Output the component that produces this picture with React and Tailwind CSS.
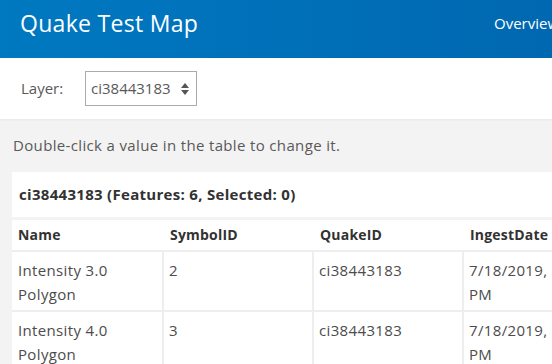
export default function App() {
  const rows = [
    { name: ["Intensity 3.0", "Polygon"], symbol: "2", quake: "ci38443183", date: ["7/18/2019, 3:12:45", "PM"] },
    { name: ["Intensity 4.0", "Polygon"], symbol: "3", quake: "ci38443183", date: ["7/18/2019, 3:12:45", "PM"] },
    { name: ["Intensity 5.0", "Polygon"], symbol: "4", quake: "ci38443183", date: ["7/18/2019, 3:12:45", "PM"] },
  ];

  return (
    <div
      className="w-[552px] h-[364px] overflow-hidden bg-[#f3f3f3]"
      style={{ fontFamily: "'Open Sans', Lato, sans-serif" }}
    >
      {/* Top bar */}
      <header className="h-[58px] pb-[12px] flex items-center bg-gradient-to-r from-[#0079c1] to-[#0068b1] whitespace-nowrap">
        <h1 className="pl-[20px] text-[23px] tracking-[0.3px] leading-none text-white w-[494px] shrink-0">Quake Test Map</h1>
        <span className="text-[15px] text-white">Overview</span>
      </header>

      {/* Layer picker */}
      <div className="h-[61px] bg-white flex items-center pl-[21px] shadow-[0_1px_2px_rgba(0,0,0,0.05)]">
        <span className="text-[15px] text-[#595959] w-[64px]">Layer:</span>
        <div className="w-[112px] h-[35px] border border-[#ababab] flex items-center pl-[5px] pr-[7px] justify-between">
          <span className="text-[15px] text-[#595959]">ci38443183</span>
          <svg width="8" height="12" viewBox="0 0 8 12">
            <path d="M4 0 L8 5 L0 5 Z" fill="#555" />
            <path d="M0 7 L8 7 L4 12 Z" fill="#555" />
          </svg>
        </div>
      </div>

      <p className="pt-[14px] pl-[13px] mb-[15px] text-[15px] tracking-[0.35px] leading-[24px] text-[#595959] whitespace-nowrap">
        Double-click a value in the table to change it.
      </p>

      {/* Table card */}
      <div className="ml-[12px] w-[600px]">
        <div className="h-[45px] bg-white flex items-center pl-[7px] text-[15px] tracking-[0.3px] font-bold text-[#323232] whitespace-nowrap">
          ci38443183 (Features: 6, Selected: 0)
        </div>
        <table className="mt-[3px] bg-white table-fixed border-collapse text-[15px] tracking-[0.35px] leading-[24px] text-[#4c4c4c] w-[600px]">
          <colgroup>
            <col className="w-[151px]" />
            <col className="w-[150px]" />
            <col className="w-[150px]" />
            <col className="w-[149px]" />
          </colgroup>
          <thead>
            <tr className="h-[31px] text-left text-[14px] tracking-[0.2px] text-[#323232]">
              <th className="pl-[6px] font-bold">Name</th>
              <th className="pl-[7px] font-bold">SymbolID</th>
              <th className="pl-[7px] font-bold">QuakeID</th>
              <th className="pl-[7px] font-bold">IngestDate</th>
            </tr>
          </thead>
          <tbody>
            {rows.map((r, i) => (
              <tr key={i} className="border-t-2 border-[#eeeeee] align-top">
                <td className="pl-[6px] pt-[6px] pb-[4px]">
                  {r.name[0]}
                  <br />
                  {r.name[1]}
                </td>
                <td className="pl-[5px] pt-[6px] pb-[4px] border-l-2 border-[#eeeeee]">{r.symbol}</td>
                <td className="pl-[5px] pt-[6px] pb-[4px] border-l-2 border-[#eeeeee]">{r.quake}</td>
                <td className="pl-[5px] pt-[6px] pb-[4px] border-l-2 border-[#eeeeee] whitespace-nowrap">
                  {r.date[0]}
                  <br />
                  {r.date[1]}
                </td>
              </tr>
            ))}
          </tbody>
        </table>
      </div>
    </div>
  );
}
